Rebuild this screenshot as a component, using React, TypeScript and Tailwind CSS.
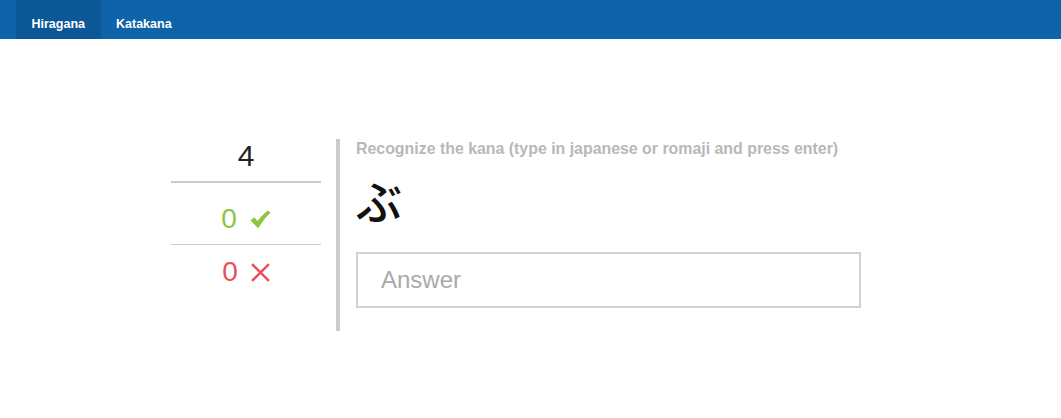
import * as React from "react";

const tabs = ["Hiragana", "Katakana"];

function CheckIcon() {
  return (
    <svg viewBox="0 0 22 20" className="h-[19px] w-[21px]" aria-hidden>
      <path
        d="M1 11 L4.4 8.2 L8 12.2 C11 8 14.5 4.2 18.6 1 L21 2.8 C16 7.5 12 12.5 8.6 18.8 Z"
        fill="#8cc63f"
        stroke="#8cc63f"
        strokeWidth="1"
        strokeLinejoin="round"
      />
    </svg>
  );
}

function CrossIcon() {
  return (
    <svg viewBox="0 0 20 20" className="h-[19px] w-[19px]" aria-hidden>
      <path d="M2 2 L18 18 M18 2 L2 18" stroke="#ea4f5c" strokeWidth="2.6" strokeLinecap="square" />
    </svg>
  );
}

export default function App() {
  const [active, setActive] = React.useState(0);
  const [answer, setAnswer] = React.useState("");

  return (
    <div className="min-h-[418px] w-full bg-white font-['Liberation_Sans',Arial,sans-serif]">
      {/* NAVBAR */}
      <nav className="flex h-[39px] bg-[#0f63a8] pl-[16px]">
        {tabs.map((t, idx) => (
          <button
            key={t}
            onClick={() => setActive(idx)}
            className={
              "h-[39px] self-start px-[15.5px] pt-[9px] text-[12.5px] font-bold leading-[16px] text-white " +
              (idx === active ? "bg-[#0c5896]" : "bg-transparent")
            }
          >
            <span className="block">{t}</span>
          </button>
        ))}
      </nav>

      {/* QUIZ */}
      <div className="flex pl-[171px] pt-[100px]">
        {/* score column */}
        <div className="w-[150px] text-center">
          <div className="border-b-2 border-[#cccccc] pb-[8px] text-[30px] leading-[34px] text-[#222]">4</div>
          <div className="flex items-center justify-center gap-[13px] border-b border-[#cccccc] pt-[14px] pb-[3px] text-[28px] leading-[44px] text-[#8cc63f]">
            <span>0</span>
            <CheckIcon />
          </div>
          <div className="flex items-center justify-center gap-[13px] pt-[5px] text-[28px] leading-[44px] text-[#ea4f5c]">
            <span>0</span>
            <CrossIcon />
          </div>
        </div>

        {/* question column */}
        <div className="ml-[15px] h-[192px] border-l-4 border-[#cccccc] pl-[16px]">
          <p className="text-[15.9px] font-bold leading-[20px] text-[#b8b8b8]">
            Recognize the kana (type in japanese or romaji and press enter)
          </p>
          <div className="mt-[12px] font-['Noto_Sans_CJK_JP','Noto_Sans_CJK_SC',sans-serif] text-[46px] font-medium leading-[56px] text-[#111]">
            ぶ
          </div>
          <input
            value={answer}
            onChange={(e) => setAnswer(e.target.value)}
            placeholder="Answer"
            className="mt-[25px] block h-[56px] w-[505px] border-2 border-[#d2d2d2] px-[23px] text-[24px] text-[#333] outline-none placeholder:text-[#aaaaaa]"
          />
        </div>
      </div>
    </div>
  );
}
